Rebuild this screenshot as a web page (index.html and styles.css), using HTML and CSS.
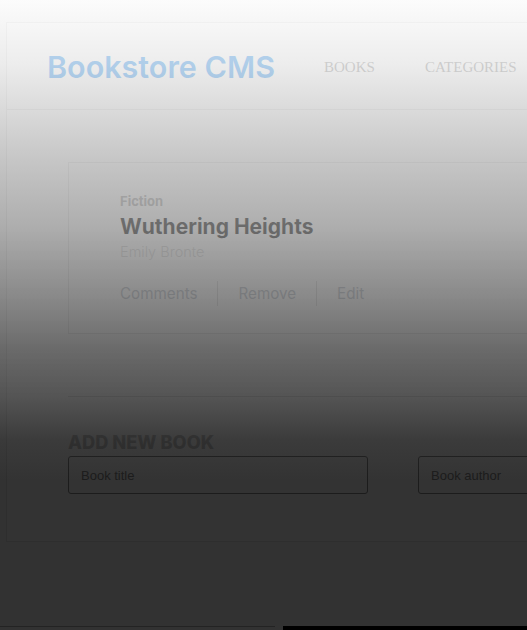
FILE: index.html
```html
<!DOCTYPE html>
<html lang="en">
<head>
<meta charset="utf-8">
<title>Bookstore CMS</title>
<link rel="stylesheet" href="styles.css">
</head>
<body>
  <div class="panel">
    <header class="header">
      <h1 class="logo">Bookstore CMS</h1>
      <nav class="nav">
        <a class="nav-link" href="#">BOOKS</a>
        <a class="nav-link" href="#">CATEGORIES</a>
      </nav>
    </header>
    <main class="main">
      <section class="book-card">
        <p class="category">Fiction</p>
        <h2 class="title">Wuthering Heights</h2>
        <p class="author">Emily Bronte</p>
        <div class="actions">
          <button class="action" type="button">Comments</button>
          <span class="sep"></span>
          <button class="action" type="button">Remove</button>
          <span class="sep"></span>
          <button class="action" type="button">Edit</button>
        </div>
      </section>
      <hr class="divider">
      <form class="add-form">
        <h3 class="form-title">ADD NEW BOOK</h3>
        <div class="fields">
          <input class="field field-title" type="text" placeholder="Book title">
          <input class="field field-author" type="text" placeholder="Book author">
        </div>
      </form>
    </main>
  </div>
  <div class="below">
    <div class="below-left"></div>
    <div class="below-right"></div>
  </div>
  <div class="shade"></div>
</body>
</html>
```
FILE: styles.css
```css
html {
  overflow: hidden;
}
body {
  margin: 0;
  padding: 22px 0 0 6px;
  background: #fafafa;
  font-family: "Inter", "Noto Sans", sans-serif;
  width: 1200px;
}
.panel {
  width: 1100px;
  background: #ffffff;
  border: 1px solid #e6e6e6;
}
.header {
  height: 86px;
  display: flex;
  align-items: center;
  gap: 49px;
  padding-left: 40px;
  border-bottom: 1px solid #e4e4e4;
}
.logo {
  margin: 0;
  font-family: "Inter", sans-serif;
  font-weight: 600;
  font-size: 30.5px;
  letter-spacing: 0;
  color: #278fef;
}
.nav {
  display: flex;
  gap: 50px;
  padding-top: 2px;
}
.nav-link {
  font-family: "Liberation Serif", serif;
  font-size: 15px;
  color: #8c8c8c;
  text-decoration: none;
}
.main {
  padding: 52px 0 47px 61px;
}
.book-card {
  height: 140px;
  border: 1px solid #e4e4e4;
  padding: 30px 51px 0;
}
.category {
  margin: 0;
  font-size: 13px;
  line-height: 16px;
  font-weight: 700;
  color: #a9a9a9;
}
.title {
  margin: 5px 0 0;
  font-size: 21px;
  line-height: 26px;
  font-weight: 700;
  color: #111111;
}
.author {
  margin: 3px 0 0;
  font-size: 14.5px;
  line-height: 18px;
  font-weight: 300;
  color: #d0d0d0;
}
.actions {
  display: flex;
  align-items: center;
  gap: 20px;
  margin-top: 20px;
}
.action {
  border: 0;
  background: none;
  padding: 0;
  font-family: "Inter", sans-serif;
  font-size: 15.2px;
  line-height: 20px;
  color: #b4bac4;
}
.sep {
  width: 1px;
  height: 25px;
  background: #d8d8d8;
}
.divider {
  margin: 62px 0 0;
  border: 0;
  border-top: 1px solid #dcdcdc;
}
.form-title {
  margin: 33px 0 0;
  font-size: 18.2px;
  line-height: 24px;
  font-weight: 800;
  color: #c4c4c4;
}
.fields {
  display: flex;
  gap: 50px;
  margin-top: 2px;
}
.field {
  box-sizing: border-box;
  width: 300px;
  height: 38px;
  border: 1px solid #8a8a8a;
  border-radius: 3px;
  padding: 0 12px;
  font-family: "Liberation Sans", Arial, sans-serif;
  font-size: 13px;
  background: #ffffff;
}
.field::placeholder {
  color: #8a8a8a;
}
.field-author {
  width: 400px;
}
.below {
  display: flex;
  margin-top: 84px;
  margin-left: -6px;
  height: 10px;
}
.below-left {
  width: 275px;
  border-top: 1px solid #b0b0b0;
  background: #fafafa;
}
.below-right {
  width: 600px;
  margin-left: 8px;
  background: #000000;
}
.shade {
  position: fixed;
  inset: 0;
  pointer-events: none;
  background: linear-gradient(to bottom,
    rgba(252, 252, 252, 0.72) 0px,
    rgba(229, 229, 229, 0.72) 65px,
    rgba(176, 176, 176, 0.72) 160px,
    rgba(142, 142, 142, 0.72) 227px,
    rgba(100, 100, 100, 0.75) 293px,
    rgba(61, 61, 61, 0.77) 350px,
    rgba(42, 42, 42, 0.8) 396px,
    rgba(10, 10, 10, 0.8) 440px,
    rgba(0, 0, 0, 0.8) 480px,
    rgba(0, 0, 0, 0.8) 100%);
}
```
